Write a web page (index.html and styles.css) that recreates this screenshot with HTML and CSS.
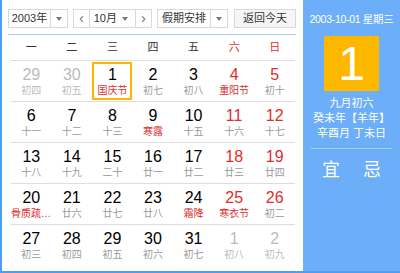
FILE: index.html
```html
<!DOCTYPE html>
<html lang="zh-CN">
<head>
	<meta charset="utf-8">
	<title>万年历</title>
	<link rel="stylesheet" href="styles.css">
</head>
<body>
	<div class="calendar">
		<div class="main">
			<div class="toolbar">
				<div class="select year">
					<span class="sel-text">2003年</span>
					<span class="sel-arrow"><i></i></span>
				</div>
				<div class="select month">
					<span class="nav">&lsaquo;</span>
					<span class="sel-text">10月</span>
					<span class="sel-arrow"><i></i></span>
					<span class="nav">&rsaquo;</span>
				</div>
				<div class="select holiday">
					<span class="sel-text">假期安排</span>
					<span class="sel-arrow"><i></i></span>
				</div>
				<div class="today-btn">返回今天</div>
			</div>

			<ul class="week">
				<li>一</li><li>二</li><li>三</li><li>四</li><li>五</li>
				<li class="weekend">六</li><li class="weekend">日</li>
			</ul>

			<ul class="days">
				<li class="other"><b>29</b><span>初四</span></li>
				<li class="other"><b>30</b><span>初五</span></li>
				<li class="current"><b>1</b><span class="fest">国庆节</span></li>
				<li><b>2</b><span>初七</span></li>
				<li><b>3</b><span>初八</span></li>
				<li class="weekend"><b>4</b><span class="fest">重阳节</span></li>
				<li class="weekend"><b>5</b><span>初十</span></li>

				<li><b>6</b><span>十一</span></li>
				<li><b>7</b><span>十二</span></li>
				<li><b>8</b><span>十三</span></li>
				<li><b>9</b><span class="fest">寒露</span></li>
				<li><b>10</b><span>十五</span></li>
				<li class="weekend"><b>11</b><span>十六</span></li>
				<li class="weekend"><b>12</b><span>十七</span></li>

				<li><b>13</b><span>十八</span></li>
				<li><b>14</b><span>十九</span></li>
				<li><b>15</b><span>二十</span></li>
				<li><b>16</b><span>廿一</span></li>
				<li><b>17</b><span>廿二</span></li>
				<li class="weekend"><b>18</b><span>廿三</span></li>
				<li class="weekend"><b>19</b><span>廿四</span></li>

				<li><b>20</b><span class="fest">骨质疏松日</span></li>
				<li><b>21</b><span>廿六</span></li>
				<li><b>22</b><span>廿七</span></li>
				<li><b>23</b><span>廿八</span></li>
				<li><b>24</b><span class="fest">霜降</span></li>
				<li class="weekend"><b>25</b><span class="fest">寒衣节</span></li>
				<li class="weekend"><b>26</b><span>初二</span></li>

				<li><b>27</b><span>初三</span></li>
				<li><b>28</b><span>初四</span></li>
				<li><b>29</b><span>初五</span></li>
				<li><b>30</b><span>初六</span></li>
				<li><b>31</b><span>初七</span></li>
				<li class="other"><b>1</b><span>初八</span></li>
				<li class="other"><b>2</b><span>初九</span></li>
			</ul>
		</div>

		<div class="side">
			<p class="side-date">2003-10-01 星期三</p>
			<div class="side-day">1</div>
			<div class="side-lunar">
				<p>九月初六</p>
				<p>癸未年【羊年】</p>
				<p>辛酉月 丁未日</p>
			</div>
			<div class="side-yiji">
				<span>宜</span>
				<span>忌</span>
			</div>
		</div>
	</div>
</body>
</html>
```

FILE: styles.css
```css
*{
	margin: 0;
	padding: 0;
	box-sizing: border-box;
}
ul{
	list-style: none
}
body{
	font-family: "Liberation Sans", "Noto Sans CJK SC", sans-serif;
	background: #fff;
	color: #000;
}

.calendar{
	display: flex;
	width: 400px;
	height: 273px;
	border-left: 2px solid #4b9ef4;
	border-bottom: 2px solid #4b9ef4;
}

/* left part */
.main{
	width: 301px;
	padding: 9px 7px 0 6px;
}
.toolbar{
	display: flex;
	height: 26px;
	border-bottom: 1px solid #a9cdf6;
	width: 288px;
}
.select, .today-btn{
	display: flex;
	height: 19px;
	border: 1px solid #d9d9d9;
	font-size: 11px;
	color: #333;
	line-height: 17px;
	white-space: nowrap;
}
.select span{
	display: block;
	text-align: center;
}
.sel-text{
	flex: 1;
}
.sel-arrow{
	border-left: 1px solid #d9d9d9;
	width: 17px;
	position: relative;
}
.sel-arrow i{
	position: absolute;
	left: 5px;
	top: 7px;
	border-left: 3.5px solid transparent;
	border-right: 3.5px solid transparent;
	border-top: 4px solid #777;
}
.year{
	width: 60px;
}
.month{
	width: 79px;
	margin-left: 5px;
}
.month .nav{
	width: 16px;
	color: #777;
	font-size: 15px;
	line-height: 15px;
}
.month .nav:first-child{
	border-right: 1px solid #d9d9d9;
}
.month .nav:last-child{
	border-left: 1px solid #d9d9d9;
}
.month .sel-text{
	text-align: right;
	padding-right: 2px;
}
.month .sel-arrow{
	border-left: none;
	width: 16px;
}
.month .sel-arrow i{
	left: 3px;
}
.holiday{
	width: 71px;
	margin-left: 5px;
}
.today-btn{
	width: 62px;
	margin-left: 6px;
	justify-content: center;
	background: #f5f5f5;
}

.week{
	display: grid;
	grid-template-columns: repeat(7, 1fr);
	margin: 0 1px 0 3px;
	height: 26px;
	border-bottom: 1px solid #ddd;
	font-size: 11px;
	line-height: 24px;
	text-align: center;
	color: #333;
}
.week .weekend{
	color: #e02d2d;
}

.days{
	display: grid;
	grid-template-columns: repeat(7, 1fr);
	margin: 0 1px 0 3px;
}
.days li{
	position: relative;
	height: 41px;
	border-bottom: 1px solid #ddd;
	padding-top: 5px;
	text-align: center;
	overflow: hidden;
}
.days li:nth-last-child(-n+7){
	border-bottom: none;
}
.days b{
	display: block;
	font-weight: normal;
	font-size: 16px;
	line-height: 17px;
	color: #000;
}
.days span{
	display: block;
	font-size: 10px;
	line-height: 15px;
	color: #999;
	white-space: nowrap;
	overflow: hidden;
	text-overflow: ellipsis;
}
.days .weekend b{
	color: #e02d2d;
}
.days .other b{
	color: #bbb;
}
.days .other span{
	color: #bbb;
}
.days span.fest{
	color: #e02d2d;
}
.days .current::after{
	content: "";
	position: absolute;
	left: 0;
	right: 1px;
	top: 1px;
	bottom: 1px;
	border: 2px solid #ffb400;
}

/* right part */
.side{
	width: 97px;
	background: #6daef8;
	color: #fff;
	text-align: center;
	padding-top: 12px;
}
.side-date{
	font-size: 10.5px;
	line-height: 15px;
	letter-spacing: -0.3px;
	white-space: nowrap;
}
.side-day{
	width: 55px;
	height: 55px;
	margin: 9px auto 0;
	background: #ffb800;
	font-size: 48px;
	line-height: 55px;
}
.side-lunar{
	margin-top: 5px;
	font-size: 11px;
	line-height: 15px;
	white-space: nowrap;
}
.side-yiji{
	margin: 7px 8px 0;
	border-top: 1px solid #a3cdfa;
	padding-top: 12px;
	display: flex;
	justify-content: center;
	gap: 23px;
	font-size: 18px;
	line-height: 18px;
}
```
